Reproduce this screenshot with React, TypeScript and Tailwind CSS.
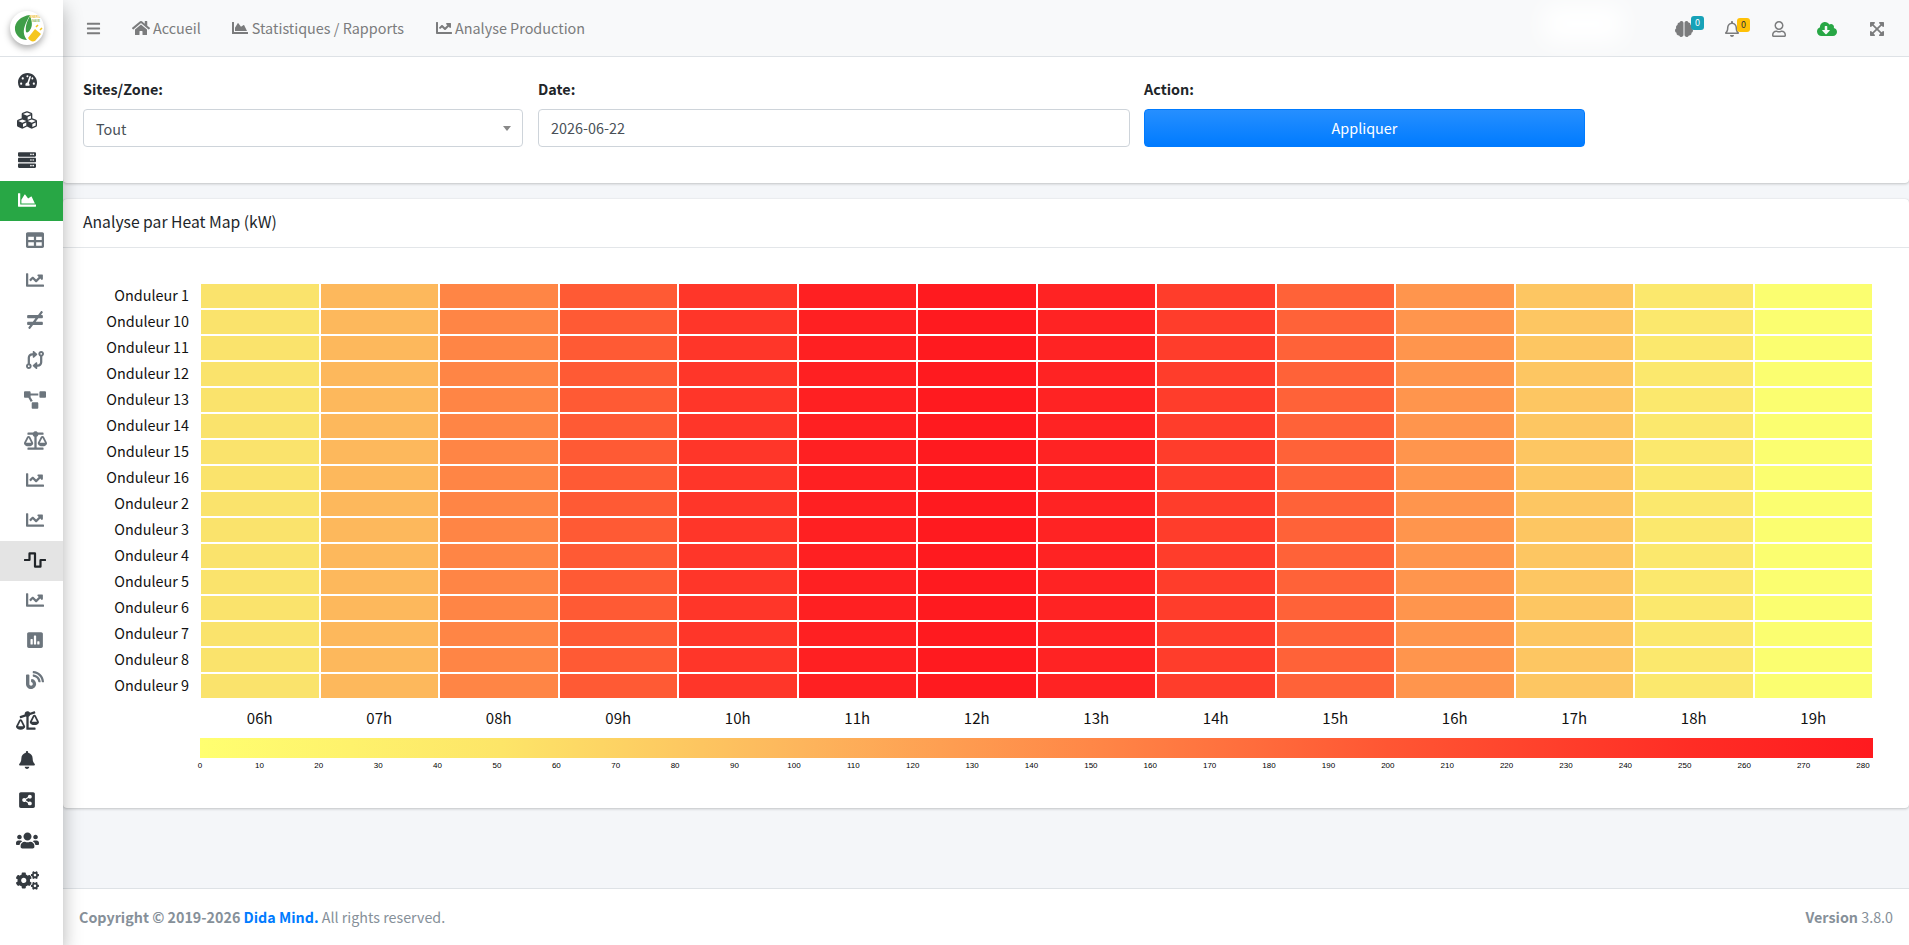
import React from "react";
import {
  FaBalanceScale,
  FaBalanceScaleLeft,
  FaBars,
  FaBell,
  FaBlog,
  FaBrain,
  FaChartArea,
  FaChartLine,
  FaCloudDownloadAlt,
  FaCogs,
  FaCubes,
  FaExpandArrowsAlt,
  FaHome,
  FaNotEqual,
  FaPoll,
  FaProjectDiagram,
  FaRegBell,
  FaRegUser,
  FaServer,
  FaShareAltSquare,
  FaTable,
  FaTachometerAlt,
  FaUsers,
  FaWaveSquare,
} from "react-icons/fa";
import { FaCodeCompare } from "react-icons/fa6";

const sidebarItems = [
  { icon: FaTachometerAlt, size: 19 },
  { icon: FaCubes, size: 20 },
  { icon: FaServer, size: 18 },
  { icon: FaChartArea, size: 18, active: true },
  { icon: FaTable, size: 18, sub: true },
  { icon: FaChartLine, size: 18, sub: true },
  { icon: FaNotEqual, size: 18, sub: true },
  { icon: FaCodeCompare, size: 18, sub: true },
  { icon: FaProjectDiagram, size: 22, sub: true },
  { icon: FaBalanceScale, size: 23, sub: true },
  { icon: FaChartLine, size: 18, sub: true },
  { icon: FaChartLine, size: 18, sub: true },
  { icon: FaWaveSquare, size: 22, sub: true, current: true },
  { icon: FaChartLine, size: 18, sub: true },
  { icon: FaPoll, size: 18, sub: true },
  { icon: FaBlog, size: 18, sub: true },
  { icon: FaBalanceScaleLeft, size: 23 },
  { icon: FaBell, size: 18 },
  { icon: FaShareAltSquare, size: 18 },
  { icon: FaUsers, size: 23 },
  { icon: FaCogs, size: 23 },
];

const rows = [1, 10, 11, 12, 13, 14, 15, 16, 2, 3, 4, 5, 6, 7, 8, 9].map((n) => `Onduleur ${n}`);

const hours = [
  { label: "06h", color: "#fae36c" },
  { label: "07h", color: "#fdb85c" },
  { label: "08h", color: "#ff8545" },
  { label: "09h", color: "#ff5a34" },
  { label: "10h", color: "#ff3629" },
  { label: "11h", color: "#ff2022" },
  { label: "12h", color: "#ff1a1f" },
  { label: "13h", color: "#ff2323" },
  { label: "14h", color: "#ff3d2b" },
  { label: "15h", color: "#ff6238" },
  { label: "16h", color: "#ff954d" },
  { label: "17h", color: "#fdc662" },
  { label: "18h", color: "#fbe86d" },
  { label: "19h", color: "#fbfe70" },
];

const ticks: number[] = [];
for (let i = 0; i <= 28; i++) {
  ticks.push(i * 10);
}

function Logo() {
  return (
    <div className="w-[34px] h-[34px] rounded-full bg-white shadow-[0_3px_7px_rgba(0,0,0,0.35)] overflow-hidden">
      <svg viewBox="0 0 34 34" className="w-full h-full">
        <path d="M20 4 C11 5 4 11 5 19 C6 25 11 29 17 29 C14 25 13 21 14.5 16 C15.5 12 18 8 20 4 Z" fill="#3f9e48" />
        <path d="M20 5 C22 10 23 15 20 19 C19 21 17 22 16 21 C15 16 17 10 20 5 Z" fill="#3f9e48" />
        <path d="M18 27 L25 18 L31 23 L25 30 C22 31 20 30 18 27 Z" fill="#f5c61e" />
        <path d="M26 16 L28 14 M30 19 L32 17" stroke="#f5c61e" strokeWidth="1.6" />
        <text x="26" y="7" fontSize="3" fontWeight="700" fill="#f0c43a" textAnchor="middle" fontFamily="Liberation Sans, sans-serif">
          ENERGY
        </text>
        <text x="26" y="11" fontSize="3" fontWeight="700" fill="#8cb85a" textAnchor="middle" fontFamily="Liberation Sans, sans-serif">
          SAVE
        </text>
      </svg>
    </div>
  );
}

function Sidebar() {
  return (
    <aside className="relative z-10 w-[63px] shrink-0 bg-white shadow-[0_8px_18px_rgba(0,0,0,0.3)]">
      <div className="h-[57px] flex items-center pl-[10px] border-b border-[#dee2e6]">
        <Logo />
      </div>
      <nav className="pt-[4px]">
        {sidebarItems.map((item, index) => {
          const Icon = item.icon;
          let tone = "text-[#343a40]";
          if (item.active) tone = "bg-[#28a745] text-white";
          else if (item.current) tone = "bg-[#e4e4e4] text-[#212529]";
          else if (item.sub) tone = "text-[#6c757d]";
          return (
            <div key={index} className={`h-[40px] pb-[2px] flex items-center justify-center ${tone}`}>
              <div className={item.sub ? "w-[20px] ml-[6px] mr-[-1px] flex justify-center" : "w-[20px] mr-[9px] flex justify-center"}>
                <Icon size={item.size} className="shrink-0" />
              </div>
            </div>
          );
        })}
      </nav>
    </aside>
  );
}

function TopBar() {
  return (
    <header className="relative h-[57px] shrink-0 flex items-center bg-[#f8f9fa] border-b border-[#dee2e6] text-[#7b7c7d] text-[14.4px] leading-[24px]">
      <FaBars size={15} className="ml-[23px] mr-[31px]" />
      <a className="flex items-center gap-[3px] mr-[31px]">
        <FaHome size={18} />
        Accueil
      </a>
      <a className="flex items-center gap-[4px] mr-[32px]">
        <FaChartArea size={16} />
        Statistiques / Rapports
      </a>
      <a className="flex items-center gap-[3px]">
        <FaChartLine size={16} />
        Analyse Production
      </a>
      <div className="absolute left-[1480px] top-[6px] w-[80px] h-[36px] bg-white blur-md" />
      <div className="ml-auto flex items-center pr-[7px] pt-[1px]">
        <div className="relative w-[48px] flex justify-center">
          <FaBrain size={18} />
          <span className="absolute left-[31px] top-[-4px] w-[13px] h-[14px] rounded-[3px] bg-[#17a2b8] text-white text-[9px] leading-[13px] text-center">0</span>
        </div>
        <div className="relative w-[48px] flex justify-center">
          <FaRegBell size={16} />
          <span className="absolute left-[29px] top-[-3px] w-[13px] h-[14px] rounded-[3px] bg-[#ffc107] text-[#1f2d3d] text-[9px] leading-[13px] text-center">0</span>
        </div>
        <div className="w-[46px] flex justify-center">
          <FaRegUser size={16} />
        </div>
        <div className="w-[50px] flex justify-center text-[#28a745]">
          <FaCloudDownloadAlt size={20} />
        </div>
        <div className="w-[50px] flex justify-center">
          <FaExpandArrowsAlt size={16} />
        </div>
      </div>
    </header>
  );
}

function FilterCard() {
  return (
    <section className="bg-white rounded-b-[4px] shadow-[0_0_1px_rgba(0,0,0,0.125),0_1px_3px_rgba(0,0,0,0.2)] h-[126px] pt-[20px] pl-[20px] flex text-[14.4px]">
      <div className="w-[440px] mr-[15px]">
        <label className="block font-bold text-[#212529] leading-[24px] mb-[8px]">Sites/Zone:</label>
        <div className="relative h-[38px] flex items-center pl-[12px] pt-[2px] border border-[#ced4da] rounded-[4px] text-[#495057]">
          Tout
          <span className="absolute right-[11px] top-[16px] border-x-[4px] border-t-[5px] border-x-transparent border-t-[#888888]" />
        </div>
      </div>
      <div className="w-[592px] mr-[14px]">
        <label className="block font-bold text-[#212529] leading-[24px] mb-[8px]">Date:</label>
        <div className="h-[38px] flex items-center pl-[12px] border border-[#ced4da] rounded-[4px] text-[#495057]">2026-06-22</div>
      </div>
      <div className="w-[441px]">
        <label className="block font-bold text-[#212529] leading-[24px] mb-[8px]">Action:</label>
        <button className="w-full h-[38px] rounded-[4px] border border-[#007bff] bg-[linear-gradient(180deg,#268fff,#007bff)] text-white">Appliquer</button>
      </div>
    </section>
  );
}

function HeatMap() {
  return (
    <section className="mt-[16px] bg-white rounded-[4px] shadow-[0_0_1px_rgba(0,0,0,0.125),0_1px_3px_rgba(0,0,0,0.2)]">
      <h3 className="h-[49px] pb-[2px] flex items-center pl-[20px] border-b border-[#e3e6e9] text-[#212529] text-[15.7px]">Analyse par Heat Map (kW)</h3>
      <div className="pt-[36px] pb-[36px] text-[#111111] text-[14.4px]">
        <div className="flex">
          <div className="w-[126px] grid grid-rows-16 gap-[2px] text-right">
            {rows.map((row) => (
              <div key={row} className="h-[24px] leading-[22px]">{row}</div>
            ))}
          </div>
          <div className="ml-[12px] mr-[37px] flex-1 grid grid-rows-16 gap-[2px]">
            {rows.map((row) => (
              <div key={row} className="h-[24px] flex gap-[2px]">
                {hours.map((hour) => (
                  <div key={hour.label} className="flex-1" style={{ backgroundColor: hour.color }} />
                ))}
              </div>
            ))}
          </div>
        </div>
        <div className="mt-[8px] ml-[138px] mr-[37px] h-[24px] flex gap-[2px] leading-[24px] text-center text-[15px]">
          {hours.map((hour) => (
            <div key={hour.label} className="flex-1">{hour.label}</div>
          ))}
        </div>
        <div className="mt-[8px] ml-[137px] mr-[36px] h-[20px] bg-[linear-gradient(90deg,#ffff70_0%,#fde568_18%,#fdb55c_36%,#ff8546_54%,#ff5633_71%,#ff2d25_89%,#ff1a1f_100%)]" />
        <div className="ml-[137px] mr-[46px] h-[14px] flex justify-between font-['Liberation_Sans',sans-serif] text-[8px] leading-[15px] text-black">
          {ticks.map((tick) => (
            <div key={tick} className="w-0 flex justify-center">{tick}</div>
          ))}
        </div>
      </div>
    </section>
  );
}

function Footer() {
  return (
    <footer className="h-[57px] shrink-0 flex items-center justify-between px-[16px] bg-white border-t border-[#dee2e6] text-[#869099] text-[14.3px] leading-[24px]">
      <div>
        <strong>Copyright © 2019-2026 <span className="text-[#007bff]">Dida Mind.</span></strong> All rights reserved.
      </div>
      <div>
        <strong>Version</strong> 3.8.0
      </div>
    </footer>
  );
}

export default function App() {
  return (
    <div className="h-[945px] flex overflow-hidden bg-[#f4f6f9] font-['Noto_Sans_CJK_SC',sans-serif]">
      <Sidebar />
      <div className="flex-1 flex flex-col min-w-0">
        <TopBar />
        <main className="flex-1">
          <FilterCard />
          <HeatMap />
        </main>
        <Footer />
      </div>
    </div>
  );
}
